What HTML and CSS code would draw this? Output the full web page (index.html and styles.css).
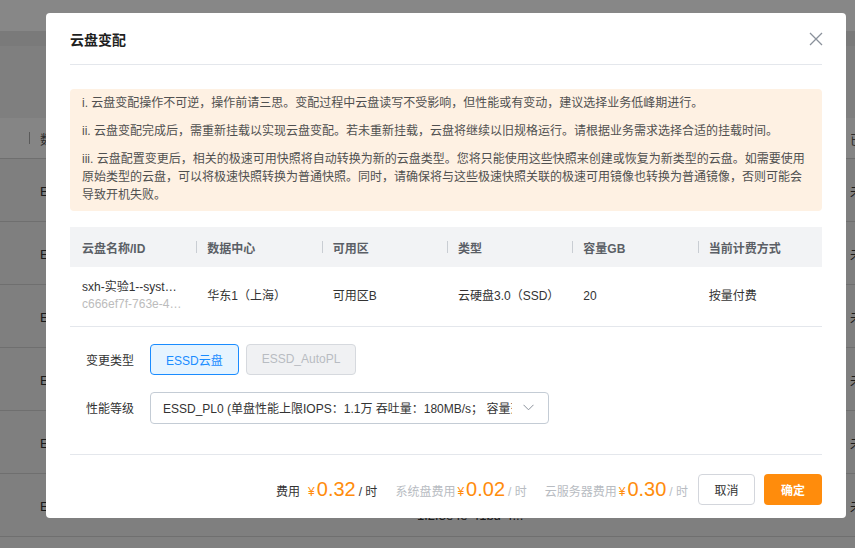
FILE: index.html
```html
<!DOCTYPE html>
<html lang="zh-CN">
<head>
    <meta charset="UTF-8">
    <meta name="viewport" content="width=device-width, initial-scale=1.0">
    <title>云盘变配</title>
    <link rel="stylesheet" href="styles.css">
</head>
<body>
    <!-- 背后的云盘列表 -->
    <div class="page">
        <div class="page-nav"></div>
        <div class="page-band"></div>
        <div class="page-space"></div>
        <div class="page-list">
            <div class="page-row page-head">
                <span class="page-sep"></span>
                <span class="page-c1">数据中心</span>
                <span class="page-c2"></span>
                <span class="page-c3">已挂载</span>
            </div>
            <div class="page-row"><span class="page-c1">ESSD云盘</span><span class="page-c2"></span><span class="page-c3">未挂载</span></div>
            <div class="page-row"><span class="page-c1">ESSD云盘</span><span class="page-c2"></span><span class="page-c3">未挂载</span></div>
            <div class="page-row"><span class="page-c1">ESSD云盘</span><span class="page-c2"></span><span class="page-c3">未挂载</span></div>
            <div class="page-row"><span class="page-c1">ESSD云盘</span><span class="page-c2"></span><span class="page-c3">未挂载</span></div>
            <div class="page-row"><span class="page-c1">ESSD云盘</span><span class="page-c2"></span><span class="page-c3">未挂载</span></div>
            <div class="page-row">
                <span class="page-c1">ESSD云盘</span>
                <span class="page-c2"><span>sxh-实验6--data</span><span>1f2f3e4e-41bd-4...</span></span>
                <span class="page-c3">未挂载</span>
            </div>
        </div>
    </div>

    <div class="mask"></div>

    <div class="modal">
        <div class="modal-header">
            <h2 class="modal-title">云盘变配</h2>
            <button class="modal-close" type="button">
                <svg width="14" height="14" viewBox="0 0 14 14"><path d="M1 1L13 13M13 1L1 13" stroke="#8a919b" stroke-width="1.3" fill="none"/></svg>
            </button>
        </div>

        <div class="modal-body">
            <div class="alert">
                <p>i. 云盘变配操作不可逆，操作前请三思。变配过程中云盘读写不受影响，但性能或有变动，建议选择业务低峰期进行。</p>
                <p>ii. 云盘变配完成后，需重新挂载以实现云盘变配。若未重新挂载，云盘将继续以旧规格运行。请根据业务需求选择合适的挂载时间。</p>
                <p>iii. 云盘配置变更后，相关的极速可用快照将自动转换为新的云盘类型。您将只能使用这些快照来创建或恢复为新类型的云盘。如需要使用原始类型的云盘，可以将极速快照转换为普通快照。同时，请确保将与这些极速快照关联的极速可用镜像也转换为普通镜像，否则可能会导致开机失败。</p>
            </div>

            <table class="disk-table">
                <thead>
                    <tr>
                        <th>云盘名称/ID</th>
                        <th>数据中心</th>
                        <th>可用区</th>
                        <th>类型</th>
                        <th>容量GB</th>
                        <th>当前计费方式</th>
                    </tr>
                </thead>
                <tbody>
                    <tr>
                        <td>
                            <div class="disk-name">sxh-实验1--system-disk</div>
                            <div class="disk-id">c666ef7f-763e-4a1b-9d2e-08f3</div>
                        </td>
                        <td>华东1（上海）</td>
                        <td>可用区B</td>
                        <td>云硬盘3.0（SSD）</td>
                        <td>20</td>
                        <td>按量付费</td>
                    </tr>
                </tbody>
            </table>

            <div class="form">
                <div class="form-row">
                    <label class="form-label">变更类型</label>
                    <div class="type-group">
                        <button class="type-btn active" type="button">ESSD云盘</button>
                        <button class="type-btn disabled" type="button">ESSD_AutoPL</button>
                    </div>
                </div>
                <div class="form-row">
                    <label class="form-label">性能等级</label>
                    <div class="select">
                        <span class="select-text">ESSD_PL0 (单盘性能上限IOPS：1.1万 吞吐量：180MB/s； 容量范围：20-32768GB)</span>
                        <svg class="select-arrow" width="11" height="7" viewBox="0 0 11 7"><path d="M0.5 0.8L5.5 5.8L10.5 0.8" stroke="#8a919b" stroke-width="1" fill="none"/></svg>
                    </div>
                </div>
            </div>
        </div>

        <div class="modal-footer">
            <div class="fees">
                <div class="fee fee-total">
                    <span class="fee-label">费用</span>
                    <span class="fee-yen">¥</span><span class="fee-num">0.32</span><span class="fee-unit">/ 时</span>
                </div>
                <div class="fee fee-sub">
                    <span class="fee-label">系统盘费用</span>
                    <span class="fee-yen">¥</span><span class="fee-num">0.02</span><span class="fee-unit">/ 时</span>
                </div>
                <div class="fee fee-sub">
                    <span class="fee-label">云服务器费用</span>
                    <span class="fee-yen">¥</span><span class="fee-num">0.30</span><span class="fee-unit">/ 时</span>
                </div>
            </div>
            <button class="btn btn-cancel" type="button">取消</button>
            <button class="btn btn-ok" type="button">确定</button>
        </div>
    </div>
</body>
</html>
```

FILE: styles.css
```css
:root {
    --orange: #ff8c0c;
    --blue: #1a8cff;
    --text: #333;
    --muted: #b8bcc2;
    --line: #e4e7ec;
}

* {
    box-sizing: border-box;
}

body {
    margin: 0;
    font-family: 'Liberation Sans', 'Noto Sans CJK SC', sans-serif;
    font-size: 12px;
    color: var(--text);
    background: #f2f2f2;
    overflow: hidden;
}

/* 背景页面 */
.page {
    width: 855px;
    height: 548px;
    overflow: hidden;
}

.page-nav {
    height: 31px;
    background: #fff;
}

.page-band {
    height: 15px;
    background: #e6e6e6;
}

.page-space {
    height: 72px;
    background: #f0f0f0;
}

.page-list {
    background: #f0f0f0;
}

.page-row {
    display: grid;
    grid-template-columns: 377px 433px 200px;
    align-items: center;
    height: 63px;
    padding-left: 40px;
    border-bottom: 1px solid #d2d2d2;
    font-size: 13px;
    white-space: nowrap;
    position: relative;
}

.page-head {
    height: 41px;
    background: #fbfbfb;
    color: #555;
}

.page-sep {
    position: absolute;
    left: 29px;
    top: 14px;
    width: 1px;
    height: 12px;
    background: #aaa;
}

.page-c2 {
    display: flex;
    flex-direction: column;
    gap: 2px;
}

.mask {
    position: fixed;
    inset: 0;
    background: rgba(0, 0, 0, 0.47);
}

/* 弹窗 */
.modal {
    position: fixed;
    top: 13px;
    left: 46px;
    width: 800px;
    background: #fff;
    border-radius: 4px;
}

.modal-header {
    margin: 0 24px;
    height: 52px;
    border-bottom: 1px solid var(--line);
    display: flex;
    align-items: center;
    justify-content: space-between;
}

.modal-title {
    margin: 0;
    font-size: 14px;
    font-weight: 600;
    color: #1f1f1f;
}

.modal-close {
    border: 0;
    background: none;
    padding: 0;
    margin-right: -1px;
    display: flex;
    cursor: pointer;
}

.modal-body {
    padding: 24px 24px 30px;
}

.alert {
    background: #fef1e3;
    border-radius: 4px;
    padding: 5px 12px 7px;
    line-height: 18px;
    color: #505050;
}

.alert p {
    margin: 0 0 10px;
}

.alert p:last-child {
    margin-bottom: 0;
}

.disk-table {
    width: 100%;
    margin-top: 16px;
    border-collapse: collapse;
    table-layout: fixed;
}

.disk-table th {
    position: relative;
    height: 40px;
    padding: 0 12px;
    background: #f2f3f5;
    text-align: left;
    font-weight: 600;
    color: #5b5f66;
}

.disk-table th + th::before {
    content: "";
    position: absolute;
    left: 1px;
    top: 14px;
    width: 1px;
    height: 12px;
    background: #c9cdd3;
}

.disk-table td {
    height: 59px;
    padding: 0 0 0 12px;
    border-bottom: 1px solid var(--line);
    line-height: 17px;
    white-space: nowrap;
}

.disk-table td:first-child {
    padding-right: 12px;
}

.disk-name,
.disk-id {
    overflow: hidden;
    text-overflow: ellipsis;
}

.disk-id {
    color: #bcbcbc;
}

.form {
    padding: 17px 0 0 16px;
}

.form-row {
    display: flex;
    align-items: center;
}

.form-row + .form-row {
    margin-top: 17px;
}

.form-label {
    width: 64px;
    color: var(--text);
}

.type-group {
    display: flex;
    gap: 7px;
}

.type-btn {
    height: 31px;
    padding: 0 15px;
    border-radius: 4px;
    font: inherit;
    font-size: 12px;
}

.type-btn.active {
    background: #e6f4ff;
    border: 1px solid var(--blue);
    color: var(--blue);
}

.type-btn.disabled {
    background: #f0f1f3;
    border: 1px solid #d6d9de;
    color: var(--muted);
}

.select {
    width: 399px;
    height: 32px;
    border: 1px solid #c4ccd5;
    border-radius: 4px;
    padding: 0 14px 0 12px;
    display: flex;
    align-items: center;
    gap: 11px;
}

.select-text {
    flex: 1;
    white-space: nowrap;
    overflow: hidden;
    color: var(--text);
}

.select-arrow {
    flex-shrink: 0;
}

.modal-footer {
    margin: 0 24px;
    border-top: 1px solid var(--line);
    padding: 19px 0 13px;
    display: flex;
    justify-content: flex-end;
    align-items: center;
}

.fees {
    display: flex;
    align-items: baseline;
    gap: 18px;
    margin-right: 10px;
}

.fee {
    display: flex;
    align-items: baseline;
}

.fee-label {
    margin-right: 2px;
}

.fee-total .fee-label {
    margin-right: 8px;
}

.fee-sub .fee-label,
.fee-sub .fee-unit {
    color: var(--muted);
}

.fee-yen {
    color: var(--orange);
}

.fee-num {
    margin: 0 3px 0 2px;
    font-size: 20px;
    color: var(--orange);
}

.btn {
    height: 31px;
    border-radius: 4px;
    font: inherit;
    font-size: 12px;
    cursor: pointer;
}

.btn-cancel {
    width: 57px;
    border: 1px solid #d3d6dc;
    background: #fff;
    color: var(--text);
}

.btn-ok {
    width: 58px;
    margin-left: 9px;
    border: 0;
    background: var(--orange);
    color: #fff;
    font-weight: 600;
}
```
